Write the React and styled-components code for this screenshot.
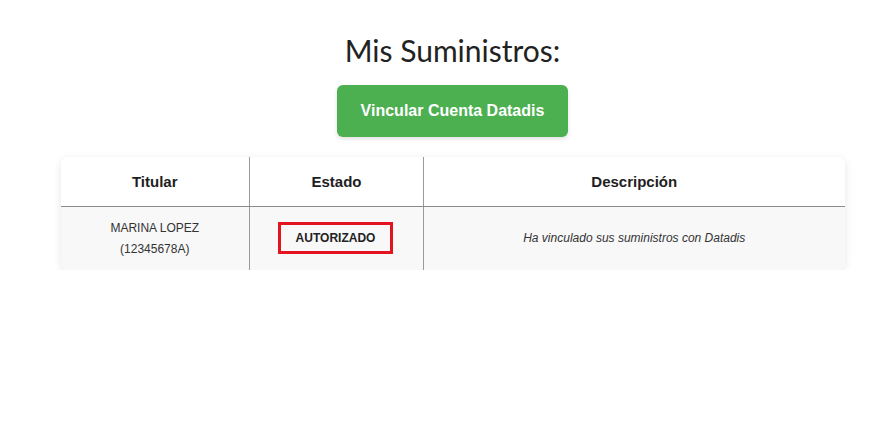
import React from 'react';
import styled, { createGlobalStyle } from 'styled-components';

const GlobalStyle = createGlobalStyle`
  body {
    margin: 0;
    background: #fff;
    font-family: 'Liberation Sans', Arial, sans-serif;
  }
`;

const Page = styled.div`
  padding: 28px 0 0 30px;
  display: flex;
  flex-direction: column;
  align-items: center;
`;

const Title = styled.h1`
  margin: 0;
  font-family: Lato, 'Liberation Sans', sans-serif;
  font-weight: 400;
  font-size: 30px;
  line-height: 44px;
  color: #222;
`;

const LinkButton = styled.button`
  margin-top: 13px;
  width: 231px;
  height: 52px;
  border: none;
  border-radius: 6px;
  background: #4caf50;
  color: #fff;
  font-family: 'Liberation Sans', Arial, sans-serif;
  font-weight: bold;
  font-size: 16px;
  box-shadow: 0 2px 4px rgba(0, 0, 0, 0.12);
  cursor: pointer;
`;

const TableCard = styled.div`
  margin-top: 20px;
  width: 784px;
  border-radius: 8px;
  overflow: hidden;
  box-shadow: 0 2px 8px rgba(0, 0, 0, 0.1);
`;

const Table = styled.table`
  width: 100%;
  border-collapse: collapse;
  table-layout: fixed;
`;

const Th = styled.th`
  height: 49px;
  padding: 0;
  background: #fff;
  font-size: 15px;
  font-weight: bold;
  color: #1e1e1e;
  border-bottom: 1px solid #8a8a8a;
  border-left: ${p => (p.first ? 'none' : '1px solid #9a9a9a')};
`;

const Td = styled.td`
  height: 63px;
  padding: 0;
  background: #f8f8f8;
  text-align: center;
  vertical-align: middle;
  font-size: 12px;
  line-height: 21px;
  color: #333;
  font-style: ${p => (p.italic ? 'italic' : 'normal')};
  border-left: ${p => (p.first ? 'none' : '1px solid #9a9a9a')};
`;

const StatusBadge = styled.span`
  display: inline-block;
  box-sizing: border-box;
  vertical-align: middle;
  width: 115px;
  height: 32px;
  line-height: 26px;
  margin: -2px 2px 0 0;
  border: 3px solid #e3141f;
  font-size: 12px;
  font-weight: bold;
  color: #222;
`;

export default function App() {
  return (
    <>
      <GlobalStyle />
      <Page>
        <Title>Mis Suministros:</Title>
        <LinkButton>Vincular Cuenta Datadis</LinkButton>
        <TableCard>
          <Table>
            <colgroup>
              <col style={{ width: '189px' }} />
              <col style={{ width: '174px' }} />
              <col />
            </colgroup>
            <thead>
              <tr>
                <Th first>Titular</Th>
                <Th>Estado</Th>
                <Th>Descripción</Th>
              </tr>
            </thead>
            <tbody>
              <tr>
                <Td first>
                  MARINA LOPEZ
                  <br />
                  (12345678A)
                </Td>
                <Td>
                  <StatusBadge>AUTORIZADO</StatusBadge>
                </Td>
                <Td italic>Ha vinculado sus suministros con Datadis</Td>
              </tr>
            </tbody>
          </Table>
        </TableCard>
      </Page>
    </>
  );
}
